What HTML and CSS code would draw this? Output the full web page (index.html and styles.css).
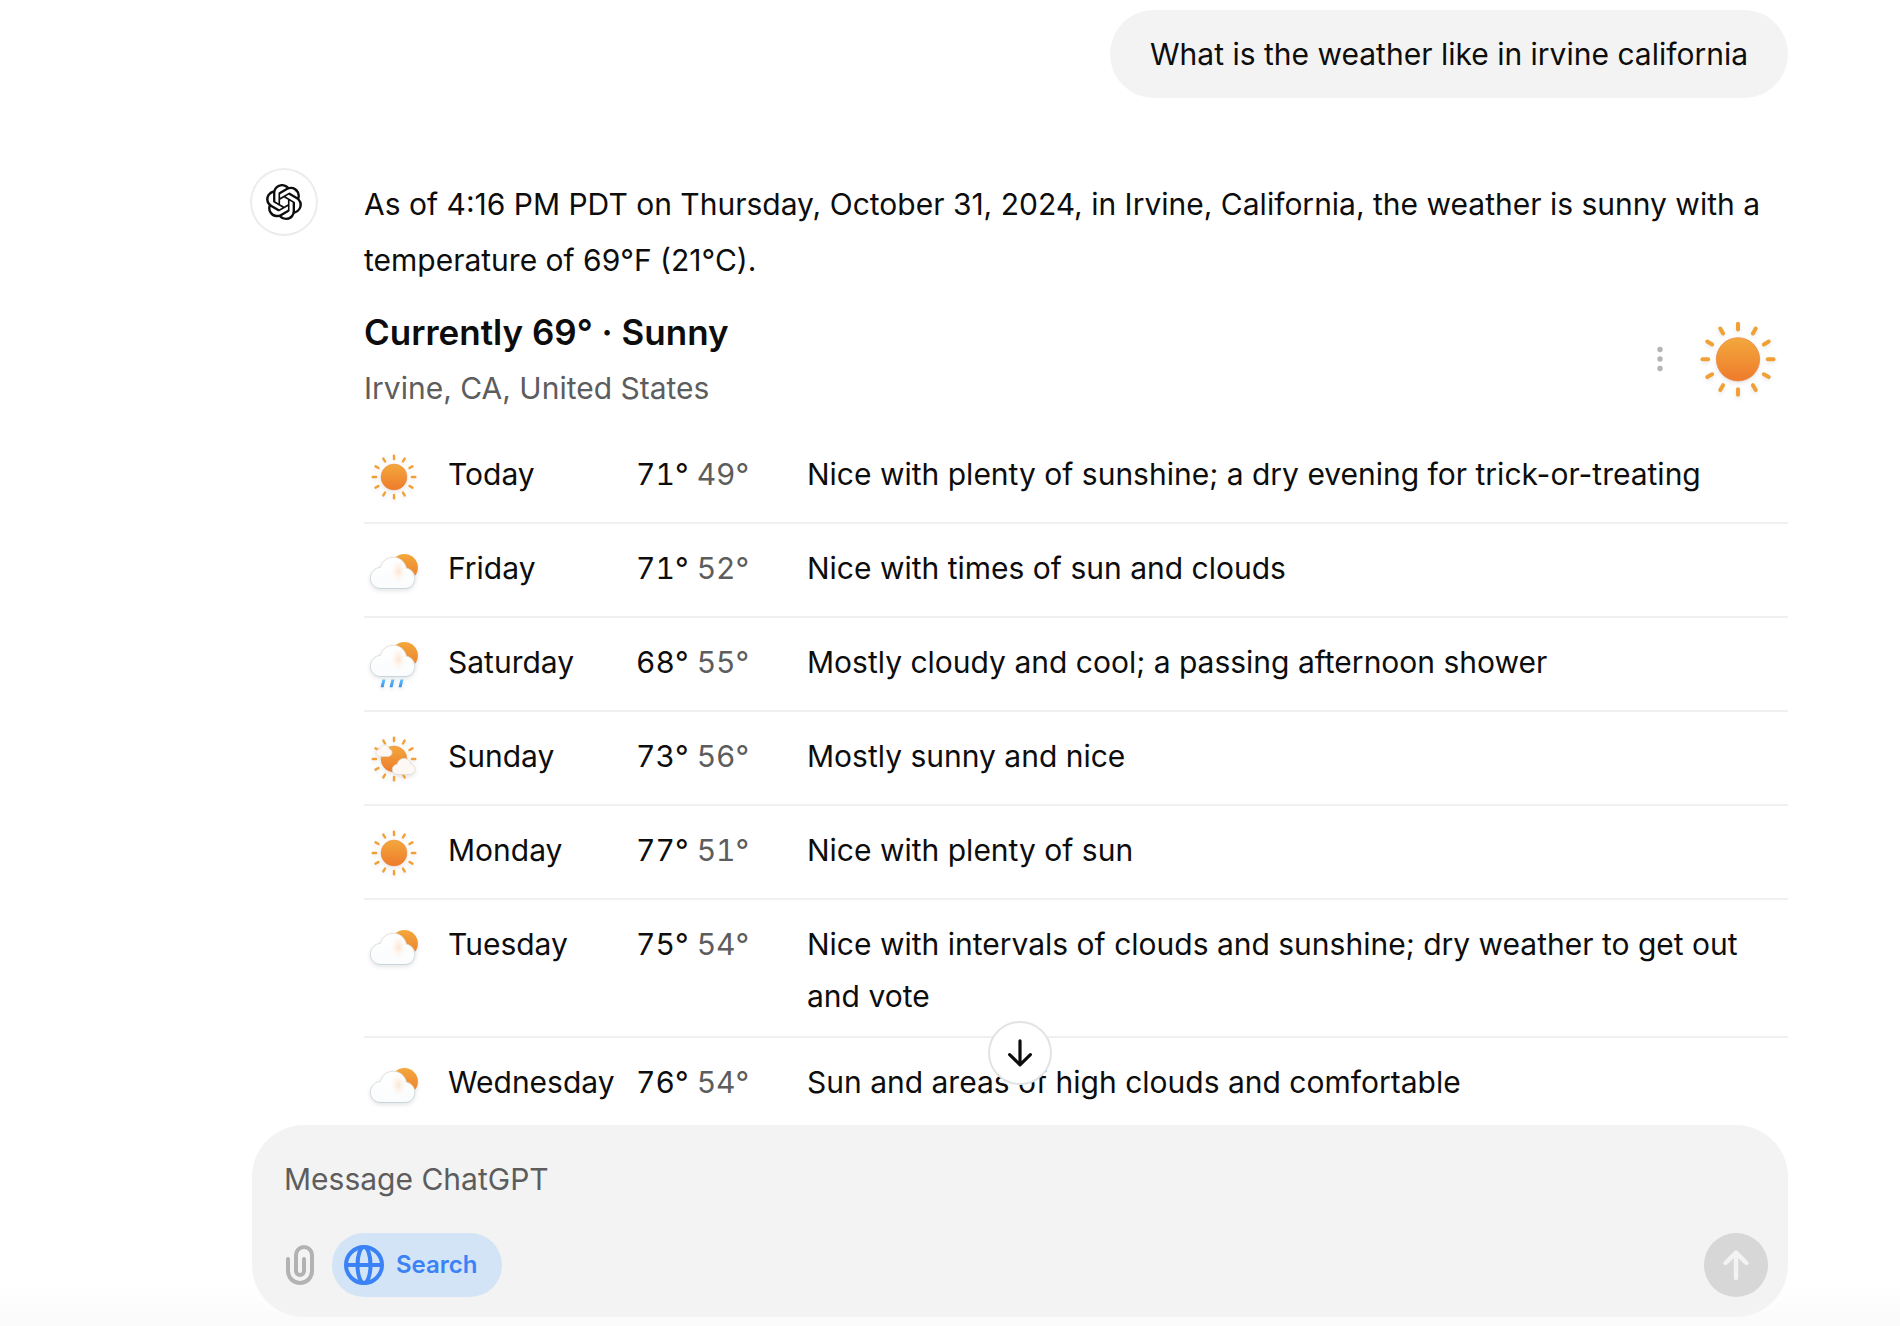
FILE: index.html
```html
<!DOCTYPE html>
<html lang="en">
<head>
    <meta charset="UTF-8">
    <meta name="viewport" content="width=device-width, initial-scale=1.0">
    <title>ChatGPT</title>
    <link rel="stylesheet" href="styles.css">
</head>
<body>
    <!-- weather icons, reused by the forecast -->
    <svg class="sprite" aria-hidden="true">
        <defs>
            <linearGradient id="sunFill" x1="0" y1="0" x2="0" y2="1">
                <stop offset="0" stop-color="#f3a83c"/>
                <stop offset="1" stop-color="#ee7b2c"/>
            </linearGradient>
            <linearGradient id="cloudFill" x1="0" y1="0" x2="0" y2="1">
                <stop offset="0" stop-color="#fff"/>
                <stop offset="1" stop-color="#fafcfd"/>
            </linearGradient>
            <linearGradient id="cloudLine" x1="0" y1="0" x2="0" y2="1">
                <stop offset="0" stop-color="#e0e0dc"/>
                <stop offset="1" stop-color="#c6d6db"/>
            </linearGradient>
            <radialGradient id="glow">
                <stop offset="0" stop-color="#fbdcc0" stop-opacity=".75"/>
                <stop offset="1" stop-color="#fff4ea" stop-opacity="0"/>
            </radialGradient>
            <linearGradient id="rainFill" x1="0" y1="0" x2="0" y2="1">
                <stop offset="0" stop-color="#5cc3f5"/>
                <stop offset="1" stop-color="#3b8ef0"/>
            </linearGradient>
        </defs>
        <symbol id="sunny" viewBox="0 0 60 60">
            <g stroke="#f0a035" stroke-width="2.400" stroke-linecap="round">
                <path id="ray" d="M30 7.700v3.400"/>
                <use href="#ray" transform="rotate(30 30 29)"/>
                <use href="#ray" transform="rotate(60 30 29)"/>
                <use href="#ray" transform="rotate(90 30 29)"/>
                <use href="#ray" transform="rotate(120 30 29)"/>
                <use href="#ray" transform="rotate(150 30 29)"/>
                <use href="#ray" transform="rotate(180 30 29)"/>
                <use href="#ray" transform="rotate(210 30 29)"/>
                <use href="#ray" transform="rotate(240 30 29)"/>
                <use href="#ray" transform="rotate(270 30 29)"/>
                <use href="#ray" transform="rotate(300 30 29)"/>
                <use href="#ray" transform="rotate(330 30 29)"/>
            </g>
            <circle cx="30" cy="29" r="13" fill="url(#sunFill)" stroke="#ea7d3a" stroke-width=".4"/>
        </symbol>
        <symbol id="cloudy" viewBox="0 0 60 60">
            <circle cx="40.4" cy="25.5" r="13.5" fill="url(#sunFill)"/>
            <path id="cloud" d="M17 46.5C10.6 46.5 6.4 42 6.4 36.3C6.4 30.6 10.6 26 16.4 25.3C18.2 19.2 23 15.3 29 15.3C35.6 15.3 41 19.6 42.4 26.2C47.2 27 50.8 31.2 50.8 36.3C50.8 42 46.6 46.5 41 46.5Z" fill="url(#cloudFill)" stroke="url(#cloudLine)" stroke-width="1"/>
            <ellipse cx="34.5" cy="29" rx="8" ry="12" fill="url(#glow)"/>
        </symbol>
        <symbol id="showers" viewBox="0 0 60 60">
            <g transform="translate(0 -6)">
                <circle cx="40.4" cy="25.5" r="13.5" fill="url(#sunFill)"/>
                <use href="#cloud"/>
                <ellipse cx="34.5" cy="29" rx="8" ry="12" fill="url(#glow)"/>
            </g>
            <path d="M18.4 43.6h3l-1.8 7.6h-3zM27.4 43.6h3l-1.8 7.6h-3zM36.4 43.6h3l-1.8 7.6h-3z" fill="url(#rainFill)"/>
        </symbol>
        <symbol id="mostly-sunny" viewBox="0 0 60 60">
            <use href="#sunny"/>
            <path d="M16 26.4c-2.400 0-4-1.500-4-3.600 0-2 1.500-3.500 3.400-3.700.6-2.500 2.500-4.100 5-4.100 2.600 0 4.400 1.500 5 4.100 1.600.3 2.600 1.700 2.600 3.500 0 2.200-1.600 3.800-3.800 3.800z" fill="#fdf8f3" stroke="#e4dcd5" stroke-width=".7"/>
            <path d="M33.600 44.500c-3.200 0-5.300-2.200-5.300-5 0-2.700 2-4.900 4.800-5.200.9-3.700 3.400-5.900 6.900-5.900 3.600 0 6.200 2.300 6.900 5.700 2.500.5 4.300 2.600 4.300 5.100 0 3-2.300 5.300-5.300 5.300z" fill="#fdf8f3" stroke="#dcdad8" stroke-width=".8"/>
        </symbol>
    </svg>

    <div class="page">
        <main class="thread">
            <div class="bubble">What is the weather like in irvine california</div>

            <article class="reply">
                <div class="avatar">
                    <svg viewBox="0 0 24 24" fill="currentColor" aria-hidden="true"><path d="M22.2819 9.8211a5.9847 5.9847 0 0 0-.5157-4.9108 6.0462 6.0462 0 0 0-6.5098-2.9A6.0651 6.0651 0 0 0 4.9807 4.1818a5.9847 5.9847 0 0 0-3.9977 2.9 6.0462 6.0462 0 0 0 .7427 7.0966 5.98 5.98 0 0 0 .511 4.9107 6.051 6.051 0 0 0 6.5146 2.9001A5.9847 5.9847 0 0 0 13.2599 24a6.0557 6.0557 0 0 0 5.7718-4.2058 5.9894 5.9894 0 0 0 3.9977-2.9001 6.0557 6.0557 0 0 0-.7475-7.0729zm-9.022 12.6081a4.4755 4.4755 0 0 1-2.8764-1.0408l.1419-.0804 4.7783-2.7582a.7948.7948 0 0 0 .3927-.6813v-6.7369l2.02 1.1686a.071.071 0 0 1 .038.052v5.5826a4.504 4.504 0 0 1-4.4945 4.4944zm-9.6607-4.1254a4.4708 4.4708 0 0 1-.5346-3.0137l.142.0852 4.783 2.7582a.7712.7712 0 0 0 .7806 0l5.8428-3.3685v2.3324a.0804.0804 0 0 1-.0332.0615L9.74 19.9502a4.4992 4.4992 0 0 1-6.1408-1.6464zM2.3408 7.8956a4.485 4.485 0 0 1 2.3655-1.9728V11.6a.7664.7664 0 0 0 .3879.6765l5.8144 3.3543-2.0201 1.1685a.0757.0757 0 0 1-.071 0l-4.8303-2.7865A4.504 4.504 0 0 1 2.3408 7.872zm16.5963 3.8558L13.1038 8.364 15.1192 7.2a.0757.0757 0 0 1 .071 0l4.8303 2.7913a4.4944 4.4944 0 0 1-.6765 8.1042v-5.6772a.79.79 0 0 0-.407-.667zm2.0107-3.0231l-.142-.0852-4.7735-2.7818a.7759.7759 0 0 0-.7854 0L9.409 9.2297V6.8974a.0662.0662 0 0 1 .0284-.0615l4.8303-2.7866a4.4992 4.4992 0 0 1 6.6802 4.66zM8.3065 12.863l-2.02-1.1638a.0804.0804 0 0 1-.038-.0567V6.0742a4.4992 4.4992 0 0 1 7.3757-3.4537l-.142.0805L8.704 5.459a.7948.7948 0 0 0-.3927.6813zm1.0976-2.3654l2.602-1.4998 2.6069 1.4998v2.9994l-2.5974 1.4997-2.6067-1.4997Z"/></svg>
                </div>
                <div class="content">
                    <p>As of 4:16 PM PDT on Thursday, October 31, 2024, in Irvine, California, the weather is sunny with a temperature of 69°F (21°C).</p>

                    <header class="current">
                        <div>
                            <h2>Currently 69° · Sunny</h2>
                            <div class="place">Irvine, CA, United States</div>
                        </div>
                        <button type="button" class="more" aria-label="More options">
                            <svg viewBox="0 0 8 28" fill="currentColor"><circle cx="4" cy="4.500" r="2.700"/><circle cx="4" cy="14" r="2.700"/><circle cx="4" cy="23.500" r="2.700"/></svg>
                        </button>
                        <svg class="weather big"><use href="#sunny"/></svg>
                    </header>

                    <table class="forecast">
                        <tr>
                            <td class="icon"><svg class="weather"><use href="#sunny"/></svg></td>
                            <td class="day">Today</td>
                            <td class="temp">71° <span>49°</span></td>
                            <td>Nice with plenty of sunshine; a dry evening for trick-or-treating</td>
                        </tr>
                        <tr>
                            <td class="icon"><svg class="weather"><use href="#cloudy"/></svg></td>
                            <td class="day">Friday</td>
                            <td class="temp">71° <span>52°</span></td>
                            <td>Nice with times of sun and clouds</td>
                        </tr>
                        <tr>
                            <td class="icon"><svg class="weather"><use href="#showers"/></svg></td>
                            <td class="day">Saturday</td>
                            <td class="temp">68° <span>55°</span></td>
                            <td>Mostly cloudy and cool; a passing afternoon shower</td>
                        </tr>
                        <tr>
                            <td class="icon"><svg class="weather"><use href="#mostly-sunny"/></svg></td>
                            <td class="day">Sunday</td>
                            <td class="temp">73° <span>56°</span></td>
                            <td>Mostly sunny and nice</td>
                        </tr>
                        <tr>
                            <td class="icon"><svg class="weather"><use href="#sunny"/></svg></td>
                            <td class="day">Monday</td>
                            <td class="temp">77° <span>51°</span></td>
                            <td>Nice with plenty of sun</td>
                        </tr>
                        <tr>
                            <td class="icon"><svg class="weather"><use href="#cloudy"/></svg></td>
                            <td class="day">Tuesday</td>
                            <td class="temp">75° <span>54°</span></td>
                            <td>Nice with intervals of clouds and sunshine; dry weather to get out and vote</td>
                        </tr>
                        <tr>
                            <td class="icon"><svg class="weather"><use href="#cloudy"/></svg></td>
                            <td class="day">Wednesday</td>
                            <td class="temp">76° <span>54°</span></td>
                            <td>Sun and areas of high clouds and comfortable</td>
                        </tr>
                    </table>
                </div>
            </article>
        </main>

        <form class="composer">
            <button type="button" class="scroll-down" aria-label="Scroll to bottom">
                <svg viewBox="0 0 28 28" fill="none" stroke="currentColor" stroke-width="3.200" stroke-linecap="round" stroke-linejoin="round"><path d="M14 1.800v24M3.600 15.600L14 25.800l10.400-10.200"/></svg>
            </button>
            <input type="text" placeholder="Message ChatGPT" aria-label="Message ChatGPT">
            <div class="tools">
                <button type="button" class="attach" aria-label="Attach files">
                    <svg viewBox="0 0 28 40" fill="none" stroke="currentColor" stroke-width="4" stroke-linecap="round"><path d="M2 14v12a12 12 0 0 0 24 0V10a8 8 0 0 0-16 0v16a4 4 0 0 0 8 0V14"/></svg>
                </button>
                <button type="button" class="search">
                    <svg viewBox="0 0 40 40" fill="none" stroke="currentColor" stroke-width="4"><circle cx="20" cy="20" r="18"/><ellipse cx="20" cy="20" rx="6.500" ry="18"/><path d="M2 20h36"/></svg>
                    Search
                </button>
                <button type="submit" class="send" aria-label="Send" disabled>
                    <svg viewBox="0 0 26 30" fill="none" stroke="currentColor" stroke-width="4.400" stroke-linecap="round" stroke-linejoin="round"><path d="M13 28V2.600M2.600 13L13 2.600 23.400 13"/></svg>
                </button>
            </div>
        </form>
    </div>
</body>
</html>
```
FILE: styles.css
```css
* {
    box-sizing: border-box;
}
body {
    margin: 0;
    font-family: Inter, "Liberation Sans", sans-serif;
    font-size: 30px;
    line-height: 52px;
    color: #0d0d0d;
    background-color: #fff;
}
button, input {
    font: inherit;
    color: inherit;
    border: none;
    background: none;
    padding: 0;
}
button {
    display: flex;
    align-items: center;
    justify-content: center;
    cursor: pointer;
}
.sprite {
    position: absolute;
    width: 0;
    height: 0;
}
.page {
    display: flex;
    flex-direction: column;
    height: 100vh;
    padding: 10px 112px 9px 252px;
    background: linear-gradient(to top, #fafafa, #fff 40px);
}

/* conversation */
.thread {
    flex: 1;
    min-height: 0;
    display: flex;
    flex-direction: column;
    overflow: hidden;
    margin-left: -2px;
    padding-left: 2px;
}
.bubble {
    align-self: flex-end;
    padding: 16px 40px;
    line-height: 56px;
    background-color: #f3f3f3;
    border-radius: 44px;
}
.reply {
    display: flex;
    gap: 48px;
    margin-top: 72px;
}
.avatar {
    display: flex;
    align-items: center;
    justify-content: center;
    flex: none;
    width: 64px;
    height: 64px;
    border-radius: 50%;
    box-shadow: 0 0 0 2px #ececec;
}
.avatar svg {
    width: 36px;
    height: 36px;
}
.content {
    flex: 1;
    padding-top: 6px;
}
.content p {
    margin: 0 0 20px;
    line-height: 56px;
}

/* weather card */
.current {
    display: flex;
    align-items: center;
    height: 106px;
    margin-bottom: 16px;
}
.current h2 {
    margin: 0 0 6px;
    font-size: 35px;
    line-height: 48px;
    font-weight: 600;
}
.place {
    color: #5d5d5d;
}
.more {
    margin-left: auto;
    margin-right: 24px;
    padding-bottom: 4px;
    color: #b4b4b4;
}
.more svg {
    width: 8px;
    height: 28px;
}
.weather {
    display: block;
    width: 60px;
    height: 60px;
    filter: drop-shadow(0 2px 2px rgba(0, 0, 0, 0.1));
}
.big {
    width: 100px;
    height: 100px;
}
.forecast {
    width: 100%;
    border-collapse: collapse;
}
.forecast tr {
    border-bottom: 2px solid #f0f0f0;
}
.forecast td {
    padding: 18px 0 14px;
    vertical-align: top;
}
.forecast .icon {
    width: 84px;
}
.forecast .day {
    width: 188px;
}
.forecast .temp {
    width: 171px;
    font-variant-numeric: tabular-nums;
    white-space: nowrap;
}
.temp span {
    color: #5d5d5d;
}

/* message box */
.composer {
    position: relative;
    display: flex;
    flex-direction: column;
    gap: 28px;
    padding: 28px 20px 20px 32px;
    background-color: #f3f3f3;
    border-radius: 52px;
}
.composer input {
    width: 100%;
    height: 52px;
    outline: none;
}
.composer input::placeholder {
    color: #5d5d5d;
    opacity: 1;
}
.tools {
    display: flex;
    align-items: center;
}
.attach {
    margin: 0 18px 0 2px;
    color: #b2b2b2;
}
.attach svg {
    width: 28px;
    height: 40px;
}
.search {
    gap: 12px;
    height: 64px;
    padding: 0 24px 0 12px;
    font-size: 24px;
    font-weight: 600;
    color: #3b82f6;
    background-color: #d3e4f6;
    border-radius: 32px;
}
.search svg {
    width: 40px;
    height: 40px;
}
.send {
    width: 64px;
    height: 64px;
    margin-left: auto;
    color: #f3f3f3;
    background-color: #d7d7d7;
    border-radius: 50%;
}
.send svg {
    width: 26px;
    height: 30px;
}
.scroll-down {
    position: absolute;
    left: 50%;
    bottom: calc(100% + 40px);
    width: 64px;
    height: 64px;
    margin-left: -32px;
    background-color: #fff;
    border: 2px solid #e3e3e3;
    border-radius: 50%;
}
.scroll-down svg {
    width: 28px;
    height: 28px;
}
```
